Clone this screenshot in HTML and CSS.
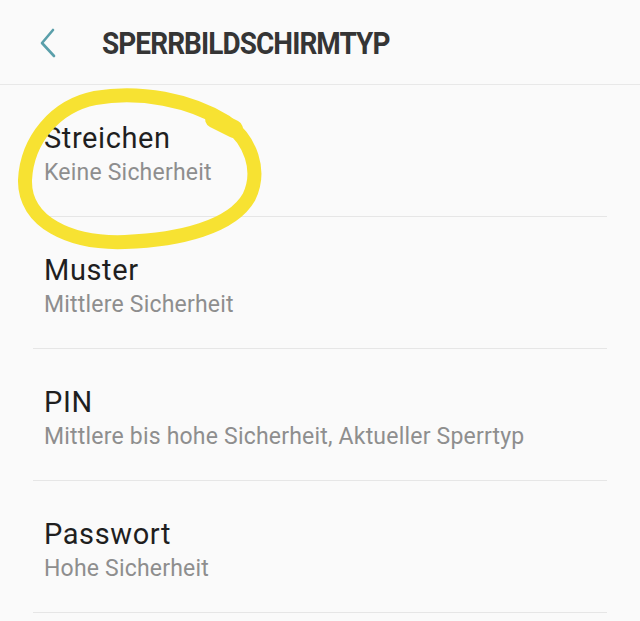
FILE: index.html
```html
<!DOCTYPE html>
<html lang="de">
<head>
<meta charset="utf-8">
<title>Sperrbildschirmtyp</title>
<link rel="stylesheet" href="styles.css">
</head>
<body>
<div class="screen">
  <header class="appbar">
    <button class="back" aria-label="Zurück">
      <svg width="24" height="32" viewBox="0 0 24 32"><path d="M16 3 L5 16 L17 29" fill="none" stroke="#5a9faa" stroke-width="2.6" stroke-linecap="round" stroke-linejoin="round"/></svg>
    </button>
    <h1 class="title">SPERRBILDSCHIRMTYP</h1>
  </header>
  <ul class="list">
    <li class="item"><div class="primary">Streichen</div><div class="secondary">Keine Sicherheit</div></li>
    <li class="item"><div class="primary">Muster</div><div class="secondary">Mittlere Sicherheit</div></li>
    <li class="item"><div class="primary">PIN</div><div class="secondary">Mittlere bis hohe Sicherheit, Aktueller Sperrtyp</div></li>
    <li class="item"><div class="primary">Passwort</div><div class="secondary">Hohe Sicherheit</div></li>
  </ul>
  <svg class="scribble" width="640" height="621" viewBox="0 0 640 621">
    <path d="M226 122 C190 100 140 90 95 98 C55 106 27 140 25 180 C24 222 70 244 125 242 C180 240 232 227 249 197 C262 170 250 140 228 124" fill="none" stroke="#f7e232" stroke-width="14" stroke-linecap="round"/>
    <path d="M214 119 L234 129" fill="none" stroke="#f7e232" stroke-width="18" stroke-linecap="round"/>
  </svg>
</div>
</body>
</html>
```
FILE: styles.css
```css
html, body {
  margin: 0;
  padding: 0;
  background: #fafafa;
}
.screen {
  position: relative;
  width: 640px;
  height: 621px;
  overflow: hidden;
  background: #fafafa;
  font-family: Roboto, "Noto Sans", sans-serif;
}
.appbar {
  height: 85px;
  display: flex;
  align-items: center;
  border-bottom: 1px solid #e8e8e8;
  box-sizing: border-box;
  padding-top: 2px;
}
.back {
  width: 24px;
  height: 32px;
  margin-left: 37px;
  padding: 0;
  border: 0;
  background: none;
  display: flex;
}
.title {
  margin: 0 0 0 41px;
  font-size: 31px;
  font-weight: 700;
  color: #353535;
  letter-spacing: -1px;
  transform: scaleX(0.9);
  transform-origin: left center;
  line-height: 1;
}
.list {
  list-style: none;
  margin: 0 33px;
  padding: 0;
}
.item {
  padding: 36px 0 28px 11px;
  border-bottom: 1px solid #e6e6e6;
}
.primary {
  font-size: 29px;
  line-height: 34px;
  letter-spacing: 0.6px;
  color: #1f1f1f;
}
.secondary {
  margin-top: 3px;
  font-size: 23px;
  line-height: 30px;
  letter-spacing: 0.2px;
  color: #8e8e8e;
}
.scribble {
  position: absolute;
  left: 0;
  top: 0;
  pointer-events: none;
}
```
